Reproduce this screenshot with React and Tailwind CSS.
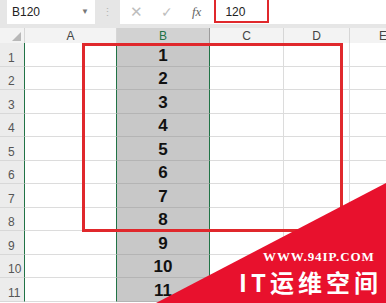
import React from 'react'

const rows = Array.from({ length: 11 }, (_, i) => i + 1)

function HeaderCell({ label, active, last }) {
  return (
    <div
      className={
        'flex items-center justify-center text-[12px] leading-none ' +
        (active
          ? 'bg-[#d2d2d2] text-[#217346] border-r border-[#9c9c9c]'
          : 'bg-[#f3f3f3] text-[#444] ' + (last ? '' : 'border-r border-[#d6d6d6]'))
      }
    >
      {label}
    </div>
  )
}

export default function App() {
  return (
    <div className="relative h-[303px] w-[386px] overflow-hidden bg-white font-['Liberation_Sans',sans-serif]">
      {/* formula bar */}
      <div className="flex h-[28px] items-start bg-[#e6e6e6]">
        <div className="ml-[7px] flex h-[24px] w-[88px] items-center justify-between bg-white pl-[5px] pr-[6px] text-[12px] text-[#222]">
          <span>B120</span>
          <span className="text-[8px] text-[#777]">▼</span>
        </div>
        <div className="flex h-[24px] w-[25px] items-center justify-center text-[11px] text-[#b5b5b5]">⋮</div>
        <div className="flex h-[24px] flex-1 items-center bg-white text-[#bdbdbd]">
          <span className="ml-[10px] w-[30px] text-[15px]">✕</span>
          <span className="ml-[1px] w-[30px] text-[14px]">✓</span>
          <span className="ml-[1px] font-['Liberation_Serif',serif] text-[13px] italic text-[#666]">fx</span>
          <span className="ml-[24px] text-[12px] text-[#222]">120</span>
        </div>
      </div>

      {/* sheet */}
      <div className="grid grid-cols-[25px_92px_93px_74px_66px_66px]">
        <div className="relative h-[15px] border-r border-[#d6d6d6] bg-[#f3f3f3]">
          <div className="absolute bottom-[2px] right-[3px] h-0 w-0 border-b-[9px] border-l-[9px] border-b-[#b8b8b8] border-l-transparent" />
        </div>
        <HeaderCell label="A" />
        <HeaderCell label="B" active />
        <HeaderCell label="C" />
        <HeaderCell label="D" />
        <HeaderCell label="E" last />

        {rows.map((r) => (
          <React.Fragment key={r}>
            <div className="flex h-[23.5px] items-end border-r border-b border-r-[#217346] border-b-[#d8d8d8] bg-[#ececec] pb-[2px] pl-[8px] text-[12px] leading-none text-[#555]">
              {r}
            </div>
            <div className="border-r border-b border-r-[#217346] border-b-[#dcdcdc]" />
            <div className="flex items-center justify-center border-r border-b border-r-[#217346] border-b-[#b4b4b4] bg-[#c8c8c8] pt-[2px] text-[17px] font-bold leading-none text-[#111]">
              {r}
            </div>
            <div className="border-r border-b border-[#dcdcdc]" />
            <div className="border-r border-b border-[#dcdcdc]" />
            <div className="border-b border-[#dcdcdc]" />
          </React.Fragment>
        ))}
      </div>

      {/* red highlight boxes */}
      <div className="absolute left-[214px] top-[-3px] h-[26px] w-[55px] border-2 border-[#e0282c]" />
      <div className="absolute left-[82px] top-[43px] h-[189px] w-[261px] border-[3px] border-[#e0282c]" />

      {/* watermark */}
      <svg className="absolute left-0 top-0" width="386" height="303" viewBox="0 0 386 303">
        <polygon points="156,303 386,183 386,303" fill="#e8112d" />
      </svg>
      <div className="absolute left-[263px] top-[250px] font-['Liberation_Serif',serif] text-[13px] font-bold leading-none tracking-[0.9px] text-white">
        WWW.94IP.COM
      </div>
      <div className="absolute left-[239px] top-[270px] font-['Noto_Sans_CJK_SC',sans-serif] text-[24px] font-bold leading-none tracking-[4px] text-white">
        IT运维空间
      </div>
    </div>
  )
}
